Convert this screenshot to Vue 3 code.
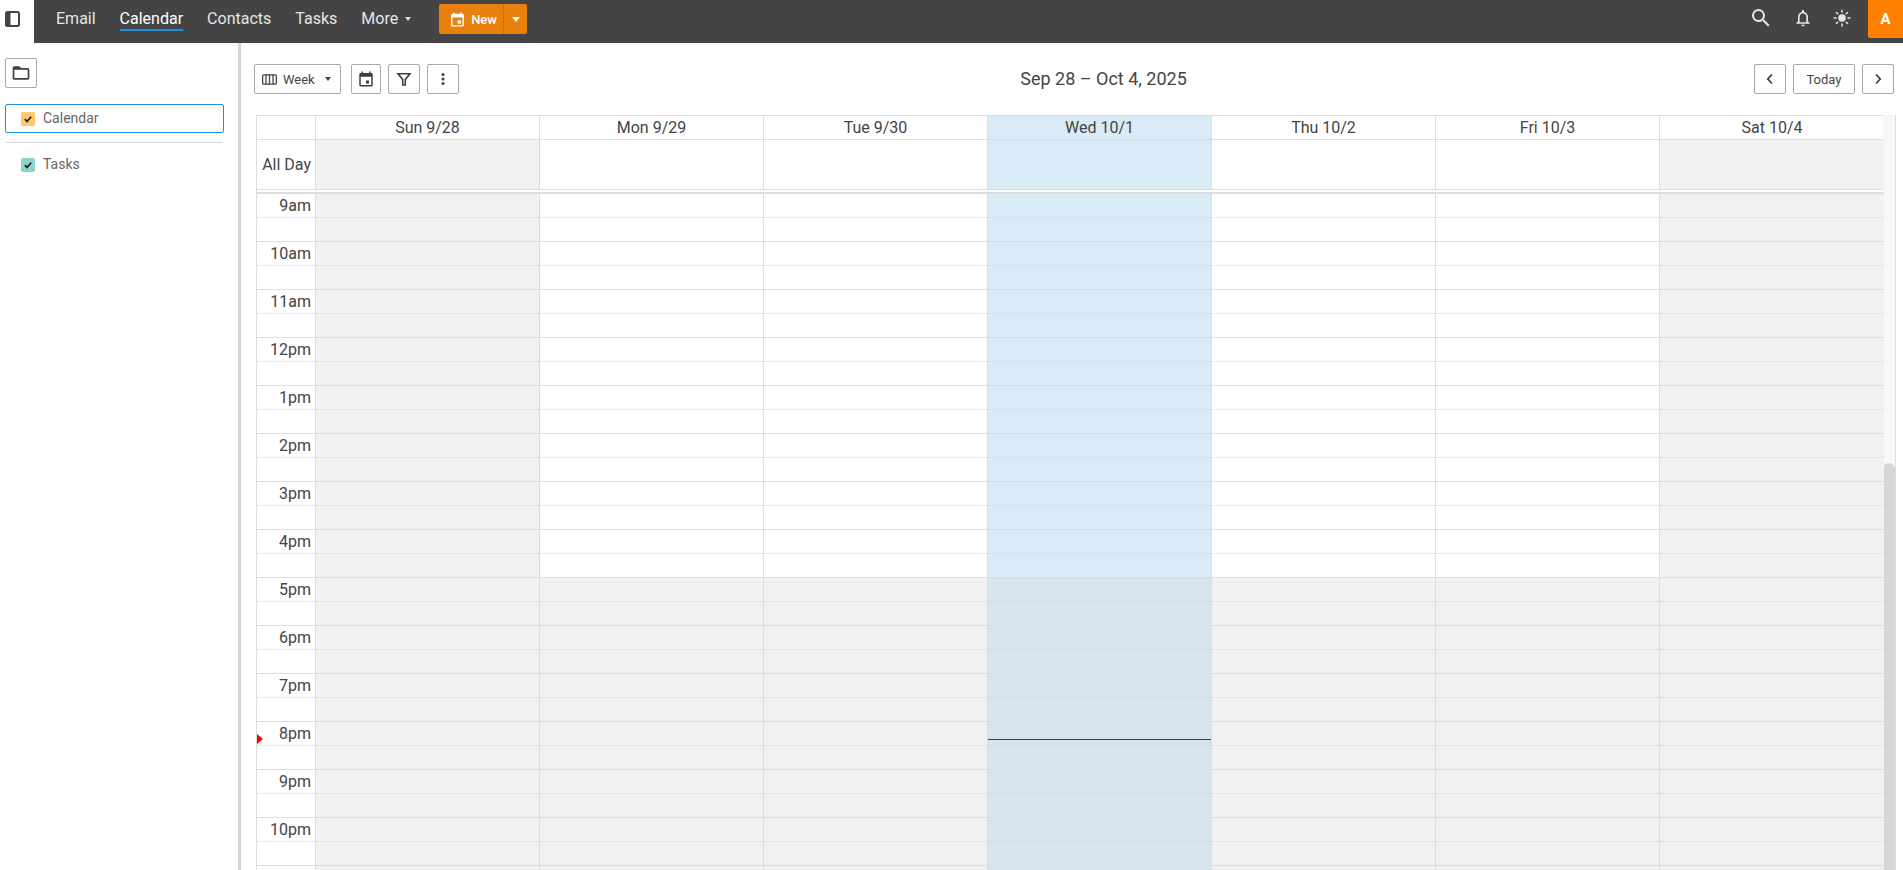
<script setup>
const nav = [
  { label: 'Email' },
  { label: 'Calendar', active: true },
  { label: 'Contacts' },
  { label: 'Tasks' },
]
const days = [
  { label: 'Sun 9/28', weekend: true },
  { label: 'Mon 9/29' },
  { label: 'Tue 9/30' },
  { label: 'Wed 10/1', today: true },
  { label: 'Thu 10/2' },
  { label: 'Fri 10/3' },
  { label: 'Sat 10/4', weekend: true },
]
const hours = [
  ['9am', false], ['10am', false], ['11am', false], ['12pm', false], ['1pm', false],
  ['2pm', false], ['3pm', false], ['4pm', false], ['5pm', true], ['6pm', true],
  ['7pm', true], ['8pm', true], ['9pm', true], ['10pm', true], ['', true],
].map(([label, evening]) => ({ label, evening }))
function cellClass(day, hour) {
  return {
    off: day.weekend || hour.evening,
    today: day.today && !hour.evening,
    'today-off': day.today && hour.evening,
  }
}
</script>

<template>
  <div class="page">
    <header class="topbar">
      <button class="panel-toggle" aria-label="Toggle panel">
        <svg width="15" height="16" viewBox="0 0 15 16"><rect x="1" y="1" width="13" height="14" rx="1.500" fill="#fff" stroke="#444" stroke-width="2"/><rect x="1" y="1" width="4.500" height="14" fill="#444"/></svg>
      </button>
      <nav class="nav">
        <a v-for="n in nav" :key="n.label" class="nav-item" :class="{ active: n.active }">{{ n.label }}</a>
        <a class="nav-item more">More<i class="caret light"></i></a>
      </nav>
      <div class="new-btn">
        <span class="new-main">
          <svg width="17" height="17" viewBox="0 0 24 24"><path fill="#fff" d="M19 4h-1V2h-2v2H8V2H6v2H5a2 2 0 0 0-2 2v14a2 2 0 0 0 2 2h14a2 2 0 0 0 2-2V6a2 2 0 0 0-2-2zm0 16H5V9h14v11zM12 13h5v5h-5z"/></svg>
          New
        </span>
        <span class="new-drop"><i class="caret white"></i></span>
      </div>
      <div class="top-right">
        <svg class="ti search" width="24" height="24" viewBox="0 0 24 24"><path fill="#e6e6e6" d="M15.500 14h-.79l-.28-.27A6.470 6.470 0 0 0 16 9.500 6.500 6.500 0 1 0 9.500 16c1.610 0 3.090-.59 4.230-1.570l.27.28v.79l5 4.990L20.490 19l-4.990-5zm-6 0C7.010 14 5 11.990 5 9.500S7.010 5 9.500 5 14 7.010 14 9.500 11.990 14 9.500 14z"/></svg>
        <svg class="ti bell" width="20" height="20" viewBox="0 0 24 24"><path fill="#e6e6e6" d="M12 22c1.100 0 2-.9 2-2h-4c0 1.100.9 2 2 2zm6-6v-5c0-3.070-1.630-5.640-4.500-6.320V4c0-.83-.67-1.500-1.500-1.500s-1.500.67-1.500 1.500v.68C7.640 5.360 6 7.920 6 11v5l-2 2v1h16v-1l-2-2zm-2 1H8v-6c0-2.480 1.510-4.500 4-4.500s4 2.020 4 4.500v6z"/></svg>
        <svg class="ti sun" width="18" height="18" viewBox="0 0 24 24"><circle cx="12" cy="12" r="5" fill="#e6e6e6"/><g stroke="#e6e6e6" stroke-width="2" stroke-linecap="round"><path d="M12 1.500v2.500M12 20v2.500M1.500 12H4M20 12h2.500M4.600 4.600l1.800 1.800M17.600 17.600l1.800 1.800M4.600 19.400l1.800-1.800M17.600 6.400l1.800-1.800"/></g></svg>
        <div class="avatar">A</div>
      </div>
    </header>

    <div class="content">
      <aside class="sidebar">
        <button class="btn folder" aria-label="Folders">
          <svg width="20" height="20" viewBox="0 0 24 24"><path fill="#3f3f3f" d="M20 6h-8l-2-2H4a2 2 0 0 0-2 2v12a2 2 0 0 0 2 2h16a2 2 0 0 0 2-2V8a2 2 0 0 0-2-2zm0 12H4V8h16v10z"/></svg>
        </button>
        <div class="cal-item selected">
          <span class="check orange"><svg width="10" height="10" viewBox="0 0 10 10"><path d="M1.800 5.200l2.200 2.200 4.200-4.600" fill="none" stroke="#222" stroke-width="1.700"/></svg></span>
          <span class="cal-label">Calendar</span>
        </div>
        <div class="side-rule"></div>
        <div class="cal-item tasks-item">
          <span class="check teal"><svg width="10" height="10" viewBox="0 0 10 10"><path d="M1.800 5.200l2.200 2.200 4.200-4.600" fill="none" stroke="#222" stroke-width="1.700"/></svg></span>
          <span class="cal-label">Tasks</span>
        </div>
      </aside>

      <main class="main">
        <div class="toolbar">
          <div class="tools-left">
            <button class="btn week">
              <svg width="15" height="15" viewBox="0 0 14 14"><rect x=".6" y="2.600" width="12.800" height="8.800" rx="1" fill="none" stroke="#444" stroke-width="1.200"/><path d="M3.700 2.600v8.800M7 2.600v8.800M10.300 2.600v8.800" stroke="#444" stroke-width="1.200"/></svg>
              <span>Week</span>
              <i class="caret dark"></i>
            </button>
            <button class="btn icon narrow" aria-label="Date">
              <svg width="18" height="18" viewBox="0 0 24 24"><path fill="#3f3f3f" d="M19 4h-1V2h-2v2H8V2H6v2H5a2 2 0 0 0-2 2v14a2 2 0 0 0 2 2h14a2 2 0 0 0 2-2V6a2 2 0 0 0-2-2zm0 16H5V9h14v11zM12 14h4v4h-4z"/></svg>
            </button>
            <button class="btn icon" aria-label="Filter">
              <svg width="16" height="16" viewBox="0 0 16 16"><path d="M2 2.800h12L9.300 8.400V14H6.700V8.400z" fill="none" stroke="#3f3f3f" stroke-width="1.600"/></svg>
            </button>
            <button class="btn icon" aria-label="More">
              <svg width="4" height="14" viewBox="0 0 4 14"><circle cx="2" cy="2.500" r="1.500" fill="#3f3f3f"/><circle cx="2" cy="7" r="1.500" fill="#3f3f3f"/><circle cx="2" cy="11.500" r="1.500" fill="#3f3f3f"/></svg>
            </button>
          </div>
          <h1 class="title">Sep 28 – Oct 4, 2025</h1>
          <div class="tools-right">
            <button class="btn icon" aria-label="Previous">
              <svg width="10" height="12" viewBox="0 0 10 12"><path d="M7 1.500L2.800 6 7 10.500" fill="none" stroke="#3f3f3f" stroke-width="1.800"/></svg>
            </button>
            <button class="btn today-btn">Today</button>
            <button class="btn icon" aria-label="Next">
              <svg width="10" height="12" viewBox="0 0 10 12"><path d="M3 1.500L7.200 6 3 10.500" fill="none" stroke="#3f3f3f" stroke-width="1.800"/></svg>
            </button>
          </div>
        </div>

        <div class="calendar">
          <div class="cal-view">
            <div class="row head">
              <div class="time-cell"></div>
              <div v-for="d in days" :key="d.label" class="day-head" :class="{ 'head-today': d.today }">{{ d.label }}</div>
            </div>
            <div class="row allday">
              <div class="time-cell allday-label">All Day</div>
              <div v-for="d in days" :key="d.label" class="day-all" :class="{ off: d.weekend, today: d.today }"></div>
            </div>
            <div class="sep"></div>
            <div class="hours">
              <div v-for="h in hours" :key="h.label" class="row hour">
                <div class="time-cell hour-label"><span>{{ h.label }}</span></div>
                <div v-for="d in days" :key="d.label" class="slot" :class="cellClass(d, h)">
                  <div v-if="d.today && h.label === '8pm'" class="now-line"></div>
                </div>
                <i v-if="h.label === '8pm'" class="now-arrow"></i>
              </div>
            </div>
          </div>
          <div class="scrollbar"><div class="thumb"></div></div>
        </div>
      </main>
    </div>
  </div>
</template>

<style scoped>
.page { width: 1903px; height: 870px; overflow: hidden; background: #fff; font-family: Roboto, "Liberation Sans", sans-serif; color: #444; }
button { font-family: inherit; margin: 0; }

.topbar { height: 43px; background: #444; display: flex; align-items: flex-start; position: relative; }
.panel-toggle { width: 34px; height: 43px; background: #fff; border: 0; padding: 0 0 6px 5px; display: flex; align-items: center; justify-content: flex-start; flex: none; box-sizing: border-box; }
.nav { display: flex; gap: 24px; margin-left: 22px; height: 38px; align-items: center; }
.nav-item { font-size: 16px; color: #e6e6e6; line-height: 20px; border-bottom: 2px solid transparent; padding-top: 1px; display: flex; align-items: center; }
.nav-item.active { color: #fff; border-bottom-color: #1d8fdb; }
.nav-item.more { gap: 7px; }
.caret { display: inline-block; width: 0; height: 0; border-left: 3.500px solid transparent; border-right: 3.500px solid transparent; border-top: 4px solid #ddd; }
.caret.white { border-top-color: #fff; border-left-width: 4.500px; border-right-width: 4.500px; border-top-width: 5px; }
.caret.dark { border-top-color: #444; }
.new-btn { display: flex; height: 30px; margin: 4px 0 0 28px; background: #e8800d; border-radius: 2px; color: #fff; font-size: 13px; font-weight: 500; }
.new-main { width: 65px; box-sizing: border-box; padding-left: 10px; display: flex; align-items: center; gap: 5px; border-right: 1px solid #c96e08; }
.new-drop { width: 23px; display: flex; align-items: center; justify-content: center; }
.top-right { margin-left: auto; display: flex; align-items: flex-start; height: 38px; }
.ti { display: block; flex: none; }
.search { margin-top: 6px; }
.bell { margin: 8px 0 0 20px; }
.sun { margin: 9px 0 0 20px; }
.avatar { width: 35px; height: 38px; margin-left: 17px; background: #ff7f00; color: #fff; font-weight: 700; font-size: 15px; display: flex; align-items: center; justify-content: center; border-bottom-left-radius: 2px; }

.content { display: flex; height: 827px; }
.sidebar { width: 241px; flex: none; box-sizing: border-box; border-right: 3px solid #d6d6d6; padding: 15px 0 0 5px; }
.btn { background: #fff; border: 1px solid #a8a8a8; border-radius: 2px; height: 30px; padding: 0; color: #444; display: inline-flex; align-items: center; justify-content: center; box-sizing: border-box; }
.folder { width: 32px; display: flex; }
.cal-item { width: 219px; height: 29px; box-sizing: border-box; display: flex; align-items: center; gap: 8px; padding-left: 15px; font-size: 14px; color: #666; border: 1px solid transparent; border-radius: 2px; }
.cal-label { margin-bottom: 2px; }
.cal-item.selected { margin-top: 16px; border-color: #1d8fdb; }
.side-rule { width: 217px; height: 1px; margin: 9px 0 0 1px; background: #d6d6d6; }
.tasks-item { margin-top: 8px; height: 28px; }
.check { width: 14px; height: 14px; border-radius: 2px; display: flex; align-items: center; justify-content: center; flex: none; }
.orange { background: #fdc76a; }
.teal { background: #8ad4c8; }

.main { flex: 1; min-width: 0; }
.toolbar { display: flex; align-items: center; height: 30px; padding: 21px 9px 0 13px; }
.tools-left, .tools-right { display: flex; flex: none; }
.tools-right { gap: 7px; }
.tools-left { gap: 7px; }
.week { width: 87px; font-size: 13px; gap: 6px; justify-content: flex-start; padding-left: 7px; }
.week .caret { margin-left: 4px; }
.icon { width: 32px; }
.icon.narrow { width: 30px; margin-left: 3px; }
.today-btn { width: 62px; font-size: 13px; }
.title { flex: 1; margin: 0 0 2px; padding-right: 6px; font-size: 18px; font-weight: 400; color: #444; text-align: center; }

.calendar { display: flex; margin: 21px 0 0 15px; }
.cal-view { width: 1627px; flex: none; border-left: 1px solid #ddd; box-sizing: border-box; }
.row { display: flex; position: relative; }
.time-cell { width: 59px; flex: none; box-sizing: border-box; border-right: 1px solid #ddd; }
.head { height: 25px; border-top: 1px solid #ddd; border-bottom: 1px solid #ddd; box-sizing: border-box; }
.day-head { width: 224px; flex: none; box-sizing: border-box; border-right: 1px solid #ddd; text-align: center; font-size: 16px; line-height: 23px; }
.day-head:last-child { border-right: 0; }
.head-today { background: #d8ebf7; }
.allday { height: 49px; }
.allday-label { font-size: 16px; line-height: 49px; text-align: right; padding-right: 4px; }
.day-all { width: 224px; flex: none; box-sizing: border-box; border-right: 1px solid #ddd; }
.day-all:last-child { border-right: 0; }
.sep { height: 4px; box-sizing: border-box; border-top: 1px solid #ddd; border-bottom: 1px solid #ddd; }
.hours { display: flex; flex-direction: column; }
.hour { height: 48px; flex: none; box-sizing: border-box; }
.hour-label { font-size: 16px; text-align: right; padding-right: 4px; line-height: 26px; height: 48px; background: linear-gradient(#ddd, #ddd) 0 0/100% 1px no-repeat; position: relative; }
.hour-label::after, .slot::after { content: ""; position: absolute; left: 0; right: 0; top: 24px; border-top: 1px dotted #d6d6d6; }
.slot { width: 224px; height: 48px; flex: none; box-sizing: border-box; border-right: 1px solid #ddd; position: relative; background-image: linear-gradient(#ddd, #ddd); background-size: 100% 1px; background-repeat: no-repeat; }
.slot:last-of-type { border-right: 0; }
.off { background-color: #f1f1f1; }
.today { background-color: #d8ebf7; }
.today-off { background-color: #d7e4ec; }
.now-line { position: absolute; left: 0; right: 0; top: 18px; height: 1px; background: #d40000; z-index: 1; }
.now-arrow { position: absolute; left: 0; top: 13px; width: 0; height: 0; border-left: 6px solid #f00; border-top: 5px solid transparent; border-bottom: 5px solid transparent; }

.scrollbar { width: 13px; height: 755px; flex: none; box-sizing: border-box; background: #f7f7f7; border-right: 1px solid #ddd; overflow: hidden; }
.thumb { height: 420px; margin-top: 348px; background: #d6d6d6; border-radius: 6px 6px 0 0; }
</style>

<style>
html, body { margin: 0; overflow: hidden; }
</style>
